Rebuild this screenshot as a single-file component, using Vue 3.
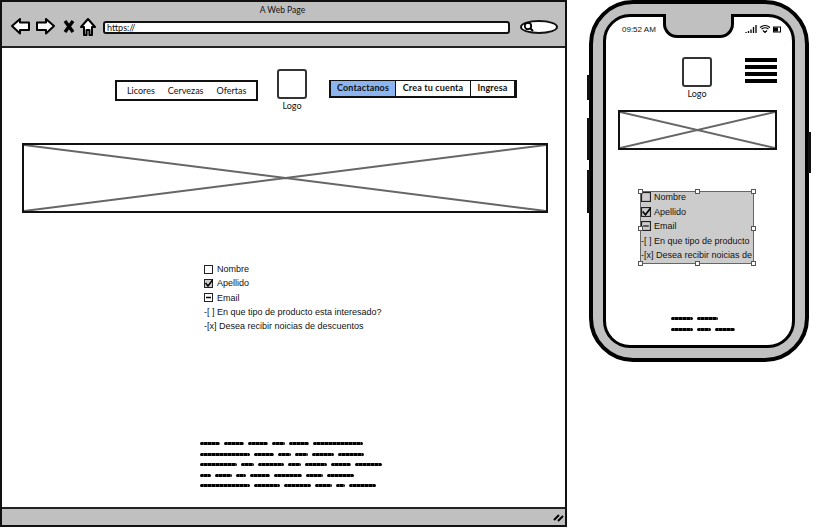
<template>
  <div class="page">
    <section class="browser">
      <header class="titlebar">
        <div class="title">A Web Page</div>
        <div class="toolbar">
          <svg class="tool-icons" width="86" height="20" viewBox="0 0 86 20">
            <path d="M1 9 L9 2 L9 5.5 L18 5.5 L18 13 L9 13 L9 16.5 Z" fill="#fff" stroke="#000" stroke-width="2" stroke-linejoin="round" />
            <path d="M43 9 L35 2 L35 5.5 L26 5.5 L26 13 L35 13 L35 16.5 Z" fill="#fff" stroke="#000" stroke-width="2" stroke-linejoin="round" />
            <path d="M54 4 L62 15 M62 4 L54 15" stroke="#000" stroke-width="3.4" fill="none" />
            <path d="M70 10 L77 2 L84 10 L81 10 L81 18 L78.500 18 L78.500 13 L75.500 13 L75.500 18 L73 18 L73 10 Z" fill="#fff" stroke="#000" stroke-width="2" stroke-linejoin="round" />
          </svg>
          <div class="urlbar">https://</div>
          <div class="search">
            <svg width="12" height="12" viewBox="0 0 12 12">
              <circle cx="5" cy="5" r="3.2" fill="none" stroke="#000" stroke-width="1.8" />
              <path d="M7.500 7.500 L10 10" stroke="#000" stroke-width="2" />
            </svg>
          </div>
        </div>
      </header>

      <main class="content">
        <div class="topnav">
          <nav class="links">
            <span v-for="link in links" :key="link">{{ link }}</span>
          </nav>
          <div class="logo">
            <div class="logo-box"></div>
            <span>Logo</span>
          </div>
          <div class="buttons">
            <span v-for="b in buttons" :key="b" class="btn" :class="{ on: b === 'Contactanos' }">{{ b }}</span>
          </div>
        </div>

        <div class="placeholder hero">
          <svg viewBox="0 0 100 100" preserveAspectRatio="none">
            <path d="M0 0 L100 100 M100 0 L0 100" stroke="#666" stroke-width="2" vector-effect="non-scaling-stroke" />
          </svg>
        </div>

        <ul class="form-list">
          <li v-for="item in checks" :key="item.label" class="check-row">
            <svg width="9" height="9" viewBox="0 0 9 9">
              <rect x="0.500" y="0.500" width="8" height="8" :fill="item.state === 'checked' ? '#ccc' : '#fff'" stroke="#222" />
              <path v-if="item.state === 'checked'" d="M1.500 4 L4 7 L9 0.500" fill="none" stroke="#000" stroke-width="1.500" />
              <path v-if="item.state === 'mixed'" d="M2 4.500 H7" stroke="#000" stroke-width="1.500" />
            </svg>
            <span>{{ item.label }}</span>
          </li>
          <li>-[ ] En que tipo de producto esta interesado?</li>
          <li>-[x] Desea recibir noicias de descuentos</li>
        </ul>

        <div class="blur-text">
          <div v-for="(row, i) in blurRows" :key="i" class="blur-row">
            <i v-for="(w, j) in row" :key="j" :style="{ width: w + 'px' }"></i>
          </div>
        </div>
      </main>

      <footer class="statusbar">
        <svg width="11" height="10" viewBox="0 0 11 10">
          <path d="M1 8 L6 3 M5 9 L10 4" stroke="#000" stroke-width="2" />
        </svg>
      </footer>
    </section>

    <section class="phone">
      <i class="side-btn left one"></i>
      <i class="side-btn left two"></i>
      <i class="side-btn left three"></i>
      <i class="side-btn right"></i>
      <div class="screen">
        <div class="notch"></div>
        <div class="status">
          <span class="time">09:52 AM</span>
          <svg width="36" height="10" viewBox="0 0 36 10">
            <path d="M1 9 V8 M3.500 9 V7 M6 9 V5.500 M8.500 9 V3 M11 9 V1" stroke="#000" stroke-width="1.300" />
            <path d="M15 3.500 Q20 -0.500 25 3.500 M16.500 5 Q20 2.500 23.500 5 M18 6.500 L20 8.500 L22 6.500" stroke="#000" stroke-width="1.200" fill="none" />
            <rect x="28.500" y="3" width="7" height="5" fill="#fff" stroke="#000" />
            <rect x="29" y="3.500" width="4" height="4" fill="#000" />
          </svg>
        </div>
        <div class="phone-top">
          <div class="logo">
            <div class="logo-box"></div>
            <span>Logo</span>
          </div>
          <div class="burger"><i></i><i></i><i></i><i></i></div>
        </div>
        <div class="placeholder phone-img">
          <svg viewBox="0 0 100 100" preserveAspectRatio="none">
            <path d="M0 0 L100 100 M100 0 L0 100" stroke="#666" stroke-width="2" vector-effect="non-scaling-stroke" />
          </svg>
        </div>
        <div class="selected">
          <ul class="form-list small">
            <li v-for="item in checks" :key="item.label" class="check-row">
              <svg width="10" height="10" viewBox="0 0 9 9">
                <rect x="0.500" y="0.500" width="8" height="8" fill="none" stroke="#222" />
                <path v-if="item.state === 'checked'" d="M1.500 4 L4 7 L9 0.500" fill="none" stroke="#000" stroke-width="1.500" />
                <path v-if="item.state === 'mixed'" d="M2 4.500 H7" stroke="#000" stroke-width="1" />
              </svg>
              <span>{{ item.label }}</span>
            </li>
            <li>-[ ] En que tipo de producto</li>
            <li>-[x] Desea recibir noicias de</li>
          </ul>
          <b v-for="h in handles" :key="h" class="handle" :class="h"></b>
        </div>
        <div class="blur-text phone-blur">
          <div v-for="(row, i) in phoneBlur" :key="i" class="blur-row">
            <i v-for="(w, j) in row" :key="j" :style="{ width: w + 'px' }"></i>
          </div>
        </div>
      </div>
    </section>
  </div>
</template>

<script setup>
const links = ['Licores', 'Cervezas', 'Ofertas']
const buttons = ['Contactanos', 'Crea tu cuenta', 'Ingresa']

const checks = [
  { label: 'Nombre', state: 'empty' },
  { label: 'Apellido', state: 'checked' },
  { label: 'Email', state: 'mixed' }
]

const handles = ['tl', 'tc', 'tr', 'ml', 'mr', 'bl', 'bc', 'br']

const blurRows = [
  [20, 20, 20, 13, 20, 50],
  [50, 20, 13, 13, 22, 26],
  [37, 13, 26, 13, 22, 20, 27],
  [11, 17, 10, 20, 28, 17, 27],
  [50, 26, 27, 17, 9, 27]
]

const phoneBlur = [
  [22, 21],
  [22, 14, 20]
]
</script>

<style scoped>
.page {
  width: 827px;
  height: 531px;
  display: flex;
  align-items: flex-start;
  font-family: Lato, "Open Sans", sans-serif;
  font-size: 9px;
  color: #111;
  background: #fff;
  overflow: hidden;
}

.browser {
  width: 567px;
  height: 527px;
  box-sizing: border-box;
  border: 2px solid #111;
  display: flex;
  flex-direction: column;
  background: #fff;
}

.titlebar {
  height: 44px;
  background: #c0c0c0;
  border-bottom: 2px solid #222;
  flex: none;
}

.title {
  text-align: center;
  padding-top: 1px;
  height: 14px;
  line-height: 14px;
  margin-right: 2px;
  font-size: 8.500px;
}

.toolbar {
  display: flex;
  align-items: flex-start;
  padding: 0 0 0 9px;
}

.urlbar {
  margin: 4px 0 0 6px;
  width: 407px;
  height: 13px;
  box-sizing: border-box;
  background: #fff;
  border: 2px solid #111;
  border-radius: 3px;
  line-height: 9px;
  padding-left: 2px;
}

.search {
  margin: 3px 0 0 10px;
  width: 38px;
  height: 14px;
  box-sizing: border-box;
  background: #fff;
  border: 2px solid #111;
  border-radius: 50%;
  display: flex;
  align-items: center;
  padding-left: 1px;
}

.content {
  flex: 1;
  display: flex;
  flex-direction: column;
}

.topnav {
  display: flex;
  align-items: flex-start;
  padding: 21px 0 0 113px;
  height: 74px;
  box-sizing: border-box;
}

.links {
  margin-top: 11px;
  width: 143px;
  height: 21px;
  box-sizing: border-box;
  border: 2px solid #111;
  display: flex;
  align-items: center;
  gap: 13px;
  padding-left: 10px;
}

.logo {
  display: flex;
  flex-direction: column;
  align-items: center;
  margin-left: 19px;
}

.logo-box {
  width: 30px;
  height: 30px;
  box-sizing: border-box;
  border: 2px solid #333;
  border-radius: 3px;
  background: #fff;
}

.logo span {
  line-height: 12px;
  margin-top: 1px;
}

.buttons {
  margin: 11px 0 0 22px;
  height: 18px;
  box-sizing: border-box;
  display: grid;
  grid-template-columns: 64px 75px 44px;
  border: 1px solid #111;
  border-left-width: 2px;
  border-right-width: 3px;
  border-bottom-width: 2px;
  font-weight: 700;
}

.btn {
  line-height: 14px;
  text-align: center;
  border-left: 1px solid #111;
  letter-spacing: 0.15px;
}

.btn.on {
  background: #8cb4ee;
  border-left: 0;
}

.placeholder {
  border: 2px solid #111;
  box-sizing: border-box;
  background: #fff;
}

.placeholder svg {
  display: block;
  width: 100%;
  height: 100%;
}

.hero {
  margin: 21px 0 0 20px;
  width: 526px;
  height: 70px;
}

.form-list {
  list-style: none;
  margin: 49px 0 0 202px;
  padding: 0;
  font-family: "Liberation Sans", sans-serif;
  line-height: 14.300px;
}

.check-row {
  display: flex;
  align-items: center;
  gap: 4px;
}

.blur-text {
  margin: 105px 0 0 198px;
}

.blur-row {
  display: flex;
  gap: 4px;
  height: 10.500px;
  align-items: center;
}

.blur-row i {
  height: 3px;
  background: repeating-linear-gradient(90deg, #000 0 3px, #444 3px 4px);
  border-radius: 2px;
  filter: blur(0.4px);
}

.statusbar {
  margin-top: auto;
  height: 18px;
  flex: none;
  background: #c0c0c0;
  border-top: 2px solid #222;
  box-sizing: border-box;
  display: flex;
  justify-content: flex-end;
  align-items: center;
  padding-right: 1px;
}

.phone {
  position: relative;
  margin: 0 0 0 22px;
  width: 220px;
  height: 362px;
  box-sizing: border-box;
  padding: 10px;
  background: #c0c0c0;
  border: 4px solid #000;
  border-radius: 44px;
}

.side-btn {
  position: absolute;
  width: 3px;
  background: #111;
}

.side-btn.left {
  left: -6px;
}

.side-btn.one {
  top: 71px;
  height: 25px;
}

.side-btn.two {
  top: 114px;
  height: 42px;
}

.side-btn.three {
  top: 166px;
  height: 43px;
}

.side-btn.right {
  right: -6px;
  top: 128px;
  height: 41px;
}

.screen {
  position: relative;
  height: 100%;
  box-sizing: border-box;
  background: #fff;
  border: 3px solid #000;
  border-radius: 27px;
  display: flex;
  flex-direction: column;
  align-items: flex-start;
}

.notch {
  position: absolute;
  left: 57px;
  top: -3px;
  width: 71px;
  height: 24px;
  box-sizing: border-box;
  background: #c0c0c0;
  border: 3px solid #000;
  border-top: 0;
  border-radius: 0 0 14px 14px;
}

.status {
  width: 100%;
  display: flex;
  justify-content: space-between;
  align-items: center;
  box-sizing: border-box;
  padding: 4px 11px 0 16px;
  height: 20px;
}

.time {
  font-family: "Liberation Sans", sans-serif;
  font-size: 8px;
}

.phone-top {
  display: flex;
  align-items: flex-start;
  margin: 20px 0 0 56px;
}

.phone-top .logo {
  margin-left: 20px;
}

.burger {
  margin: 1px 0 0 33px;
  width: 32px;
  display: flex;
  flex-direction: column;
  gap: 3px;
}

.burger i {
  height: 4px;
  background: #000;
}

.phone-img {
  margin: 10px 0 0 12px;
  width: 159px;
  height: 40px;
}

.selected {
  position: relative;
  margin: 41px 0 0 34px;
  width: 114px;
  height: 73px;
  box-sizing: border-box;
  background: #ccc;
  border: 1px solid #666;
}

.form-list.small {
  margin: -2px 0 0;
  width: 112px;
  white-space: nowrap;
  line-height: 14.500px;
}

.selected .check-row {
  gap: 3px;
}

.handle {
  position: absolute;
  width: 3px;
  height: 3px;
  background: #fff;
  border: 1px solid #555;
}

.tl { left: -3px; top: -3px; }
.tc { left: 54px; top: -3px; }
.tr { right: -3px; top: -3px; }
.ml { left: -3px; top: 34px; }
.mr { right: -3px; top: 34px; }
.bl { left: -3px; bottom: -3px; }
.bc { left: 54px; bottom: -3px; }
.br { right: -3px; bottom: -3px; }

.phone-blur {
  margin: 49px 0 0 65px;
}

.phone-blur .blur-row {
  height: 11px;
}
</style>
